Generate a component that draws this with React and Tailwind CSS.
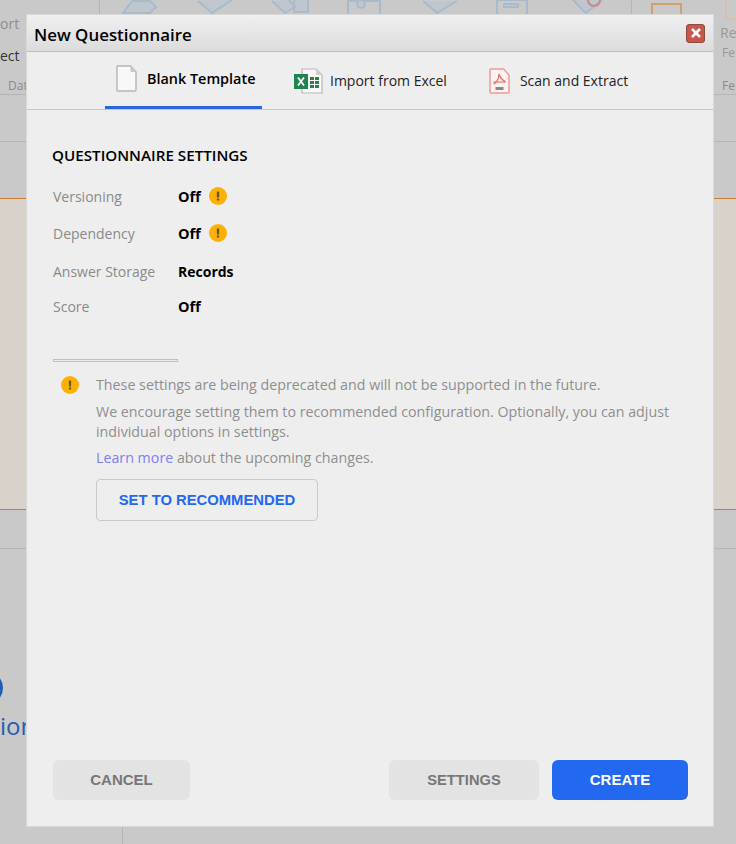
function Warn({ className = "" }) {
  return (
    <span className={`flex h-[18px] w-[18px] shrink-0 items-center justify-center rounded-full bg-[#ffb000] ${className}`}>
      <svg width="4" height="10" viewBox="0 0 4 10"><rect x="0.8" y="0.5" width="2.4" height="6" rx="0.6" fill="#6b5a20" /><rect x="0.8" y="7.4" width="2.4" height="2.2" rx="0.6" fill="#6b5a20" /></svg>
    </span>
  );
}

function BlankIcon() {
  return (
    <svg width="21" height="27" viewBox="0 0 21 27" className="shrink-0">
      <path d="M1.500 1h13l5.500 6v18a1 1 0 0 1-1 1H2a1 1 0 0 1-1-1V1.500z" fill="#f8f8f8" stroke="#b5b5b5" strokeWidth="1.4" />
      <path d="M14.500 1v6H20z" fill="#c9c9c9" />
    </svg>
  );
}

function ExcelIcon() {
  return (
    <svg width="29" height="26" viewBox="0 0 29 26" className="shrink-0">
      <path d="M8 1h14l6 6v18H8z" fill="#f8f8f8" stroke="#b8b8b8" strokeWidth="1.2" />
      <path d="M22 1v6h6z" fill="#cfcfcf" />
      <rect x="16" y="9" width="4" height="3" fill="#2f7d4f" /><rect x="21" y="9" width="4" height="3" fill="#2f7d4f" />
      <rect x="16" y="13" width="4" height="3" fill="#2f7d4f" /><rect x="21" y="13" width="4" height="3" fill="#2f7d4f" />
      <rect x="16" y="17" width="4" height="3" fill="#2f7d4f" /><rect x="21" y="17" width="4" height="3" fill="#2f7d4f" />
      <rect x="0" y="6" width="14" height="15" fill="#1f8450" />
      <path d="M4 9.500l6 8M10 9.500l-6 8" stroke="#fff" strokeWidth="1.800" />
    </svg>
  );
}

function PdfIcon() {
  return (
    <svg width="21" height="26" viewBox="0 0 21 26" className="shrink-0">
      <path d="M1.500 1h13l5.500 6v17a1 1 0 0 1-1 1H2a1 1 0 0 1-1-1V1.500z" fill="#fbf3f2" stroke="#f39a94" strokeWidth="1.500" />
      <path d="M10 6c1 3 2.500 6 6.500 7.500M10 6c0 4-2 8-5.500 10M4.500 14h12" fill="none" stroke="#f0625a" strokeWidth="1.200" />
      <rect x="6.500" y="19" width="8" height="3" fill="#8a8a8a" />
    </svg>
  );
}

function Row({ label, value, warn, className, valueClass = "text-[14.500px]" }) {
  return (
    <div className={`flex items-center ${className}`}>
      <span className="w-[125px] text-[14px] text-[#8a8a8a]">{label}</span>
      <span className={`${valueClass} font-bold text-black`}>{value}</span>
      {warn && <Warn className="ml-[8px] -mt-[2px]" />}
    </div>
  );
}

function RibbonIcons() {
  return (
    <svg width="532" height="14" viewBox="0 0 532 14" fill="none" className="block shrink-0">
      <g stroke="#a9bacb" strokeWidth="2" fill="#bfc6cd">
        <path d="M1 13l9-12h18l6 6-6 6z" />
        <path d="M76 1l14 12 20-13" />
        <path d="M150 1l13 12 10-6-6-7M172 0v12h14V0" />
        <path d="M226 14V1h32v13" fill="none" />
        <circle cx="239" cy="4" r="4" />
        <path d="M301 1l14 12 20-12" />
        <path d="M375 14V0h30v14" fill="none" />
        <rect x="382" y="4" width="14" height="3" fill="none" />
        <path d="M451 0l13 13 16-13" />
      </g>
      <circle cx="472" cy="0" r="6" stroke="#c98a86" strokeWidth="2" />
    </svg>
  );
}

function Background() {
  return (
    <div className="flex h-[844px] w-[736px] flex-col overflow-hidden bg-[#c9c9c9] font-['Open_Sans',sans-serif]">
      <div className="flex h-[95px] shrink-0 border-b border-[#b5b5b5]">
        <div className="flex w-[100px] shrink-0 flex-col border-r border-[#b5b5b5]">
          <div className="h-[78px] text-[14px] leading-[24px]">
            <div className="pt-[12px] text-[#8d8d8d]">ort</div>
            <div className="pt-[8px] text-[#333]">ect</div>
          </div>
          <div className="pl-[8px] text-[12px] leading-[16px] text-[#8a8a8a]">Dat</div>
        </div>
        <div className="flex w-[532px] shrink-0 flex-col border-r border-[#b5b5b5] pl-[22px]">
          <RibbonIcons />
        </div>
        <div className="flex flex-1 flex-col">
          <div className="h-[78px] text-[14px] leading-[20px] text-[#999]">
            <div className="flex">
              <div className="ml-[19px] mt-[3px] h-[17px] w-[31px] border-x-2 border-t-2 border-[#d2a06c]" />
              <div className="ml-[43px] h-[20px] w-[14px] rounded-bl-[3px] border-l-2 border-b-2 border-[#d9c0a8]" />
            </div>
            <div className="pl-[88px] pt-[3px]">Re</div>
            <div className="pl-[90px] text-[12px]">Fe</div>
          </div>
          <div className="pl-[90px] text-[12px] leading-[16px] text-[#8a8a8a]">Fe</div>
        </div>
      </div>
      <div className="h-[47px] shrink-0 border-b border-[#b5b5b5]" />
      <div className="h-[56px] shrink-0" />
      <div className="h-[312px] shrink-0 border-y border-[#cc7d2e] bg-[#d9d2cb]" />
      <div className="h-[39px] shrink-0 border-b border-[#b5b5b5]" />
      <div className="h-[162px] shrink-0 pt-[122px]">
        <div className="-ml-[31px] h-[34px] w-[34px] rounded-full border-[3px] border-[#1f5fb0]" />
      </div>
      <div className="h-[116px] shrink-0 text-[24px] leading-[30px] text-[#1f5fb0]">ion</div>
      <div className="flex-1 w-[123px] border-r border-[#b5b5b5]" />
    </div>
  );
}

export default function App() {
  return (
    <div className="relative h-[844px] w-[736px] overflow-hidden font-['Open_Sans',sans-serif]">
      <Background />
      <div className="absolute left-[26px] top-[14px] flex h-[813px] w-[688px] flex-col border border-[#d8d8d8] bg-[#eeeeee]">
        <div className="flex h-[37px] shrink-0 items-center justify-between border-b border-[#bdbdbd] bg-gradient-to-b from-[#f0f0f0] to-[#dcdcdc] pl-[7px] pr-[8px]">
          <span className="pt-[3px] text-[16.900px] font-semibold text-black">New Questionnaire</span>
          <button className="flex h-[19px] w-[19px] items-center justify-center rounded-[3px] border border-[#8a4a40] bg-[#c8574a]">
            <svg width="12" height="10" viewBox="0 0 12 10"><path d="M2 1l8 8M10 1l-8 8" stroke="#fff" strokeWidth="2.600" /></svg>
          </button>
        </div>
        <div className="flex h-[58px] shrink-0 border-b border-[#c8c8c8] pl-[78px] text-[14px]">
          <div className="flex h-[57px] w-[157px] items-start gap-[10px] border-b-[3px] border-[#2a66de] pl-[11px] pt-[13px]">
            <BlankIcon />
            <span className="pt-[3px] text-[14.400px] font-semibold text-black">Blank Template</span>
          </div>
          <div className="ml-[32px] flex items-center gap-[7px]">
            <ExcelIcon />
            <span className="text-[#222]">Import from Excel</span>
          </div>
          <div className="ml-[42px] flex items-center gap-[10px]">
            <PdfIcon />
            <span className="text-[#222]">Scan and Extract</span>
          </div>
        </div>
        <div className="flex flex-1 flex-col pl-[26px] pr-[25px]">
          <h2 className="-ml-[1px] pt-[35px] text-[15.200px] font-semibold leading-[20px] text-black">QUESTIONNAIRE SETTINGS</h2>
          <div className="pt-[13px]">
            <Row label="Versioning" value="Off" warn className="h-[37px]" />
            <Row label="Dependency" value="Off" warn className="h-[37px]" />
            <Row label="Answer Storage" value="Records" valueClass="text-[14px]" className="h-[38px]" />
            <Row label="Score" value="Off" className="h-[33px]" />
          </div>
          <div className="mt-[36px] h-[3px] w-[125px] border border-[#bfbfbf]" />
          <div className="flex pt-[13px]">
            <Warn className="ml-[8px] mt-[1px]" />
            <div className="ml-[17px] flex w-[592px] flex-col items-start text-[14.250px] leading-[20px] text-[#8e8e8e]">
              <p>These settings are being deprecated and will not be supported in the future.</p>
              <p className="mt-[7px]">We encourage setting them to recommended configuration. Optionally, you can adjust individual options in settings.</p>
              <p className="mt-[6px]"><span className="text-[#8080f0]">Learn more</span> about the upcoming changes.</p>
              <button className="mt-[11px] h-[42px] w-[222px] rounded-[4px] border border-[#c9c9c9] font-['Liberation_Sans',sans-serif] text-[14.800px] font-bold text-[#2268f0]">SET TO RECOMMENDED</button>
            </div>
          </div>
          <div className="mt-auto flex pb-[26px] font-['Liberation_Sans',sans-serif] text-[15px] font-bold">
            <button className="h-[40px] w-[137px] rounded-[6px] bg-[#e3e3e3] pt-[1px] text-[#777]">CANCEL</button>
            <button className="ml-auto h-[40px] w-[150px] rounded-[6px] bg-[#e3e3e3] pt-[1px] text-[14.700px] text-[#777]">SETTINGS</button>
            <button className="ml-[13px] h-[40px] w-[136px] rounded-[6px] bg-[#2268f0] pt-[1px] text-white">CREATE</button>
          </div>
        </div>
      </div>
    </div>
  );
}
